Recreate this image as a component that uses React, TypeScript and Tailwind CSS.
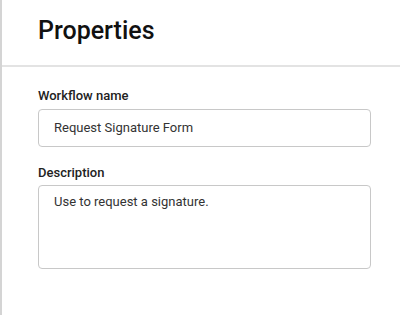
import React from "react";

export default function App() {
  return (
    <div className="w-[400px] h-[315px] bg-white flex" style={{ fontFamily: "Roboto, 'Liberation Sans', sans-serif" }}>
      <div className="w-[2px] h-full bg-[#d4d4d4]" />
      <div className="flex-1 flex flex-col">
        <div className="h-[67px] border-b-2 border-[#e3e3e3] flex items-center pl-[36px]">
          <h1 className="text-[25px] font-medium text-[#111] leading-none mt-[-4px]">Properties</h1>
        </div>
        <div className="pl-[36px] pr-[29px] pt-[21px] flex flex-col">
          <label className="text-[13px] font-medium text-[#222] leading-[16px]">Workflow name</label>
          <div className="mt-[5px] h-[38px] border border-[#c8c8c8] rounded-[4px] flex items-center px-[15px] text-[13px] text-[#333]">
            Request Signature Form
          </div>
          <label className="mt-[18px] text-[13px] font-medium text-[#222] leading-[16px]">Description</label>
          <div className="mt-[4px] h-[84px] border border-[#c8c8c8] rounded-[4px] px-[15px] pt-[7px] text-[13px] text-[#333] leading-[18px]">
            Use to request a signature.
          </div>
        </div>
      </div>
    </div>
  );
}
